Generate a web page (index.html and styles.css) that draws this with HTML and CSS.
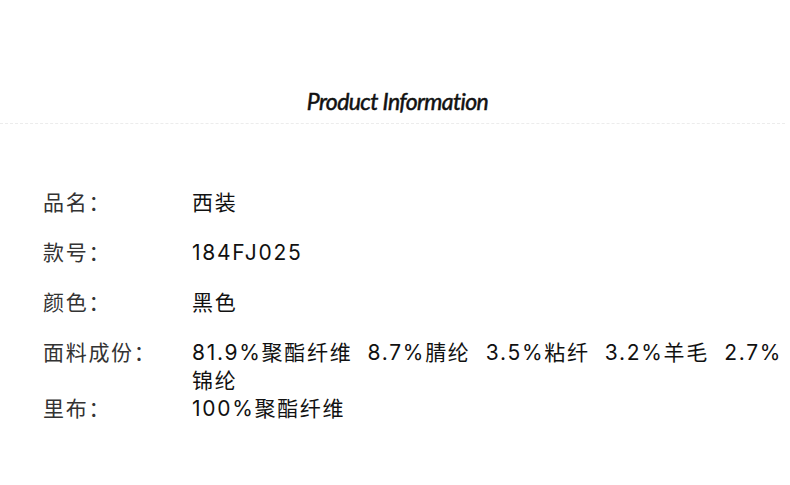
FILE: index.html
```html
<!DOCTYPE html>
<html lang="zh-CN">
<head>
<meta charset="utf-8">
<title>Product Information</title>
<link rel="stylesheet" href="styles.css">
</head>
<body>
<div class="page">
  <header class="head">
    <h1 class="title">Product Information</h1>
  </header>
  <div class="info">
    <div class="row"><div class="label">品名：</div><div class="value">西装</div></div>
    <div class="row"><div class="label">款号：</div><div class="value">184FJ025</div></div>
    <div class="row"><div class="label">颜色：</div><div class="value">黑色</div></div>
    <div class="row row-wrap"><div class="label">面料成份：</div><div class="value">81.9%聚酯纤维&nbsp; 8.7%腈纶&nbsp; 3.5%粘纤&nbsp; 3.2%羊毛&nbsp; 2.7%锦纶</div></div>
    <div class="row"><div class="label">里布：</div><div class="value">100%聚酯纤维</div></div>
  </div>
</div>
</body>
</html>
```
FILE: styles.css
```css
html, body {
  margin: 0;
  padding: 0;
  background: #ffffff;
}
.page {
  width: 790px;
  font-family: "Inter", "Noto Sans CJK SC", sans-serif;
  color: #1a1a1a;
}
.head {
  padding-top: 86px;
  border-bottom: 1px dashed #ececec;
  margin-right: 5px;
}
.title {
  margin: 0;
  padding-left: 10px;
  text-align: center;
  font-family: "Lato", sans-serif;
  font-style: italic;
  font-weight: 400;
  font-size: 23px;
  letter-spacing: -0.6px;
  -webkit-text-stroke: 0.5px #111;
  line-height: 30px;
  height: 37px;
  color: #111;
}
.info {
  padding: 65px 3px 0 43px;
}
.row {
  display: flex;
  font-size: 21px;
  line-height: 28px;
  letter-spacing: 1.7px;
  margin-bottom: 22px;
}
.row-wrap {
  margin-bottom: 0;
}
.label {
  width: 149px;
  flex-shrink: 0;
  color: #333;
}
.value {
  flex: 1;
  color: #111;
}
```
